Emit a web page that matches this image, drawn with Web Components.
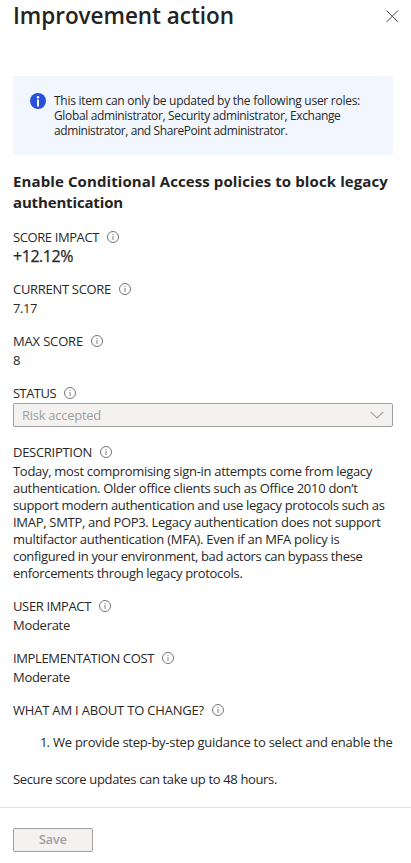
<!DOCTYPE html>
<html lang="en">
<head>
<meta charset="utf-8">
<title>Improvement action</title>
<style>
html,body{margin:0;background:#fff}
body{width:411px;height:863px;overflow:hidden;font-family:"Segoe UI","Open Sans","Noto Sans",sans-serif;font-size:13px;color:#292827}
</style>
</head>
<body>
<action-panel></action-panel>
<script>
const define = (name, html, setup) => customElements.define(name, class extends HTMLElement {
  connectedCallback() {
    if (this.shadowRoot) return;
    const t = document.createElement('template');
    t.innerHTML = html;
    this.attachShadow({mode: 'open'}).append(t.content.cloneNode(true));
    if (setup) setup(this, this.shadowRoot);
  }
});

// One line of text whose tracking is adjusted to the width in its "w" attribute.
define('text-line', `<style>:host{display:block;white-space:nowrap}span{display:inline-block}</style><span><slot></slot></span>`,
  (el, root) => {
    const s = root.querySelector('span'), w = +el.getAttribute('w');
    const n = el.textContent.length;
    const natural = s.getBoundingClientRect().width;
    if (w && natural) {
      s.style.letterSpacing = ((w - natural) / n) + 'px';
      el.style.width = w + 'px';
    }
  });

define('info-icon', `<style>:host{display:block;width:12px;height:12px;flex:none;margin-top:-1px}svg{display:block}</style>
<svg width="12" height="12" viewBox="0 0 12 12"><circle cx="6" cy="6" r="5.5" fill="none" stroke="#777573"/><path d="M6 5v4M6 3v1" stroke="#8a8886" stroke-width="1.1"/></svg>`);

define('panel-header', `<style>
:host{display:flex;justify-content:space-between;height:76px;padding:0 13px 0 13px;box-sizing:border-box}
.t{font-size:22.5px;font-weight:600;line-height:31px;color:#242322}
svg{display:block;margin:10px -1px 0 0}
</style><div class="t"><slot></slot></div>
<svg width="13" height="13" viewBox="0 0 13 13"><path d="M.5.5l11.5 11.5M12 .5l-11.5 11.5" stroke="#4b4947" stroke-width="1"/></svg>`);

define('message-bar', `<style>
:host{display:flex;gap:8px;margin:0 18px 0 13px;height:79px;box-sizing:border-box;padding:17px;background:#f1f6ff;border-radius:2px;font-size:12px;line-height:15px}
svg{display:block;flex:none}
</style><svg width="16" height="16" viewBox="0 0 16 16"><circle cx="8" cy="8" r="8" fill="#2b50d8"/><circle cx="8" cy="4.2" r="1.2" fill="#fff"/><path d="M8 6.4v7" stroke="#fff" stroke-width="2"/></svg>
<div><slot></slot></div>`);

define('detail-field', `<style>
:host{display:block}
.l{display:flex;gap:8px;align-items:center;height:19px;line-height:19px}
.v{line-height:18px}
:host([large]) .v{font-size:16px;line-height:19px;-webkit-text-stroke:.25px}
:host([long]) .v{line-height:17px;padding-top:1px;margin-bottom:-1px}
</style><div class="l"><slot name="label"></slot><info-icon></info-icon></div><div class="v"><slot></slot></div>`);

define('select-box', `<style>
:host{display:flex;justify-content:space-between;align-items:center;width:380px;height:24px;box-sizing:border-box;border:1px solid #a19f9d;border-radius:2px;background:#f3f2f1;color:#a19f9d;padding:0 8px;line-height:22px}
svg{display:block}
</style><slot></slot><svg width="14" height="8" viewBox="0 0 14 8"><path d="M.7.8L7 7 13.3.8" fill="none" stroke="#a19f9d" stroke-width="1.1"/></svg>`);

define('save-button', `<style>
:host{display:flex;justify-content:center;width:80px;height:24px;box-sizing:border-box;border:1px solid #a19f9d;border-radius:2px;background:#f3f2f1;color:#a19f9d;font-size:12.5px;font-weight:600;line-height:22px}
</style><slot></slot>`);

define('action-panel', `<style>
:host{display:block}
.h{font-size:15px;font-weight:700;line-height:21px;padding:16px 13px 1px;color:#242322}
.fields{display:flex;flex-direction:column;gap:15px;padding:14px 13px 0}
.fields>[large]{margin-bottom:-1px}
.fields>[select]{margin-bottom:1px}
.fields>[long]{margin-bottom:1px}
.fields,.note,.step{font-size:13px}
.step{display:flex;gap:4px;padding:14px 0 0 40px;line-height:17px}
.note{padding:20px 13px 0;line-height:17px}
.foot{margin-top:19px;border-top:1px solid #e1dfdd;padding:20px 13px 0}
</style>
<panel-header><text-line w="221">Improvement action</text-line></panel-header>
<message-bar>
<text-line w="306">This item can only be updated by the following user roles:</text-line>
<text-line w="286.5">Global administrator, Security administrator, Exchange</text-line>
<text-line w="233.5">administrator, and SharePoint administrator.</text-line>
</message-bar>
<div class="h"><text-line w="375">Enable Conditional Access policies to block legacy</text-line><text-line w="110">authentication</text-line></div>
<div class="fields">
<detail-field large><text-line slot="label" w="86">SCORE IMPACT</text-line><text-line w="60">+12.12%</text-line></detail-field>
<detail-field><text-line slot="label" w="98">CURRENT SCORE</text-line><text-line w="24">7.17</text-line></detail-field>
<detail-field><text-line slot="label" w="70">MAX SCORE</text-line><text-line w="7">8</text-line></detail-field>
<detail-field select><text-line slot="label" w="43">STATUS</text-line><select-box><text-line w="79">Risk accepted</text-line></select-box></detail-field>
<detail-field long><text-line slot="label" w="79">DESCRIPTION</text-line>
<text-line w="359">Today, most compromising sign-in attempts come from legacy</text-line>
<text-line w="344.5">authentication. Older office clients such as Office 2010 don’t</text-line>
<text-line w="371.5">support modern authentication and use legacy protocols such as</text-line>
<text-line w="367.5">IMAP, SMTP, and POP3. Legacy authentication does not support</text-line>
<text-line w="326.5">multifactor authentication (MFA). Even if an MFA policy is</text-line>
<text-line w="349.5">configured in your environment, bad actors can bypass these</text-line>
<text-line w="229.5">enforcements through legacy protocols.</text-line></detail-field>
<detail-field><text-line slot="label" w="78">USER IMPACT</text-line><text-line w="57">Moderate</text-line></detail-field>
<detail-field><text-line slot="label" w="141">IMPLEMENTATION COST</text-line><text-line w="57">Moderate</text-line></detail-field>
<detail-field><text-line slot="label" w="191">WHAT AM I ABOUT TO CHANGE?</text-line></detail-field>
</div>
<div class="step"><text-line w="9">1.</text-line><text-line w="339.5">We provide step-by-step guidance to select and enable the</text-line></div>
<div class="note"><text-line w="264">Secure score updates can take up to 48 hours.</text-line></div>
<div class="foot"><save-button><text-line w="28">Save</text-line></save-button></div>`);
</script>
</body>
</html>
